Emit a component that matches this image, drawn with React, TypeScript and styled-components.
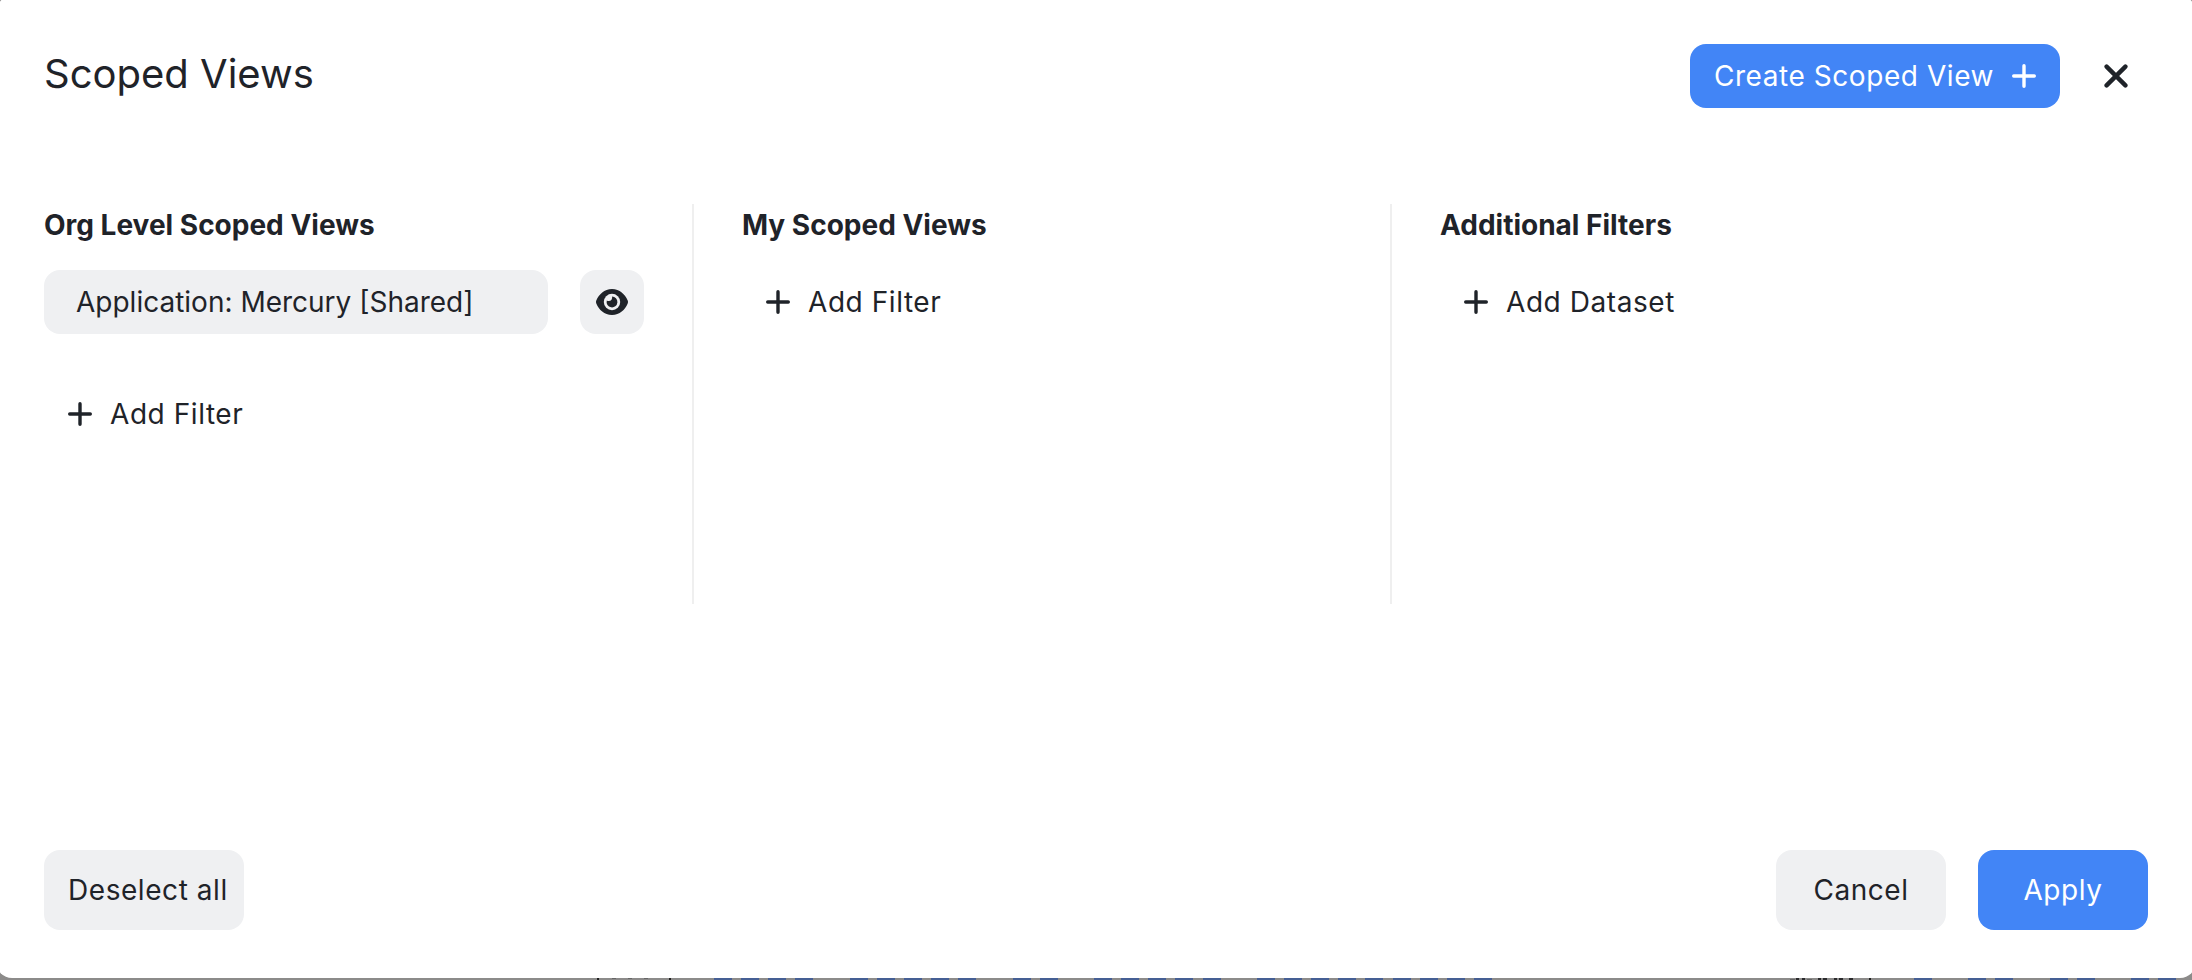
import React from "react";
import styled, { createGlobalStyle, css } from "styled-components";

const ink = "#1f2329";
const blue = "#4285f6";
const soft = "#eff0f2";

const GlobalStyle = createGlobalStyle`
  *, *::before, *::after { box-sizing: border-box; }
  html, body, #root { height: 100%; }
  body {
    margin: 0;
    overflow: hidden;
    background: #8c8b8a;
    color: ${ink};
    font-family: Inter, "Liberation Sans", sans-serif;
    font-size: 28px;
    line-height: 40px;
    -webkit-font-smoothing: antialiased;
  }
`;

const Page = styled.div`
  height: 100vh;
  display: flex;
  flex-direction: column;
`;

const Dialog = styled.section`
  flex: 1;
  display: flex;
  flex-direction: column;
  margin: -4px -4px 0;
  padding: 48px;
  background: #fff;
  border-radius: 16px;
`;

const Header = styled.header`
  display: flex;
  align-items: flex-start;
  justify-content: space-between;
`;

const Title = styled.h1`
  margin: 0;
  font-size: 40px;
  line-height: 60px;
  font-weight: 400;
`;

const Group = styled.div<{ $gap: number }>`
  display: flex;
  align-items: center;
  gap: ${({ $gap }) => $gap}px;
`;

const Button = styled.button<{ $primary?: boolean; $tall?: boolean }>`
  display: flex;
  align-items: center;
  justify-content: center;
  gap: 18px;
  height: ${({ $tall }) => ($tall ? 80 : 64)}px;
  min-width: ${({ $tall }) => ($tall ? 170 : 64)}px;
  padding: 0 24px;
  border: 0;
  border-radius: 16px;
  font: inherit;
  letter-spacing: 0.02em;
  white-space: nowrap;
  cursor: pointer;
  color: ${ink};
  background: ${soft};
  ${({ $primary }) =>
    $primary &&
    css`
      color: #fff;
      background: ${blue};
    `}
`;

const IconButton = styled(Button)`
  width: 64px;
  flex: none;
  padding: 0;
`;

const CloseButton = styled(IconButton)`
  background: none;
`;

const ViewButton = styled(Button)`
  flex: 1;
  justify-content: flex-start;
  padding: 0 32px;
  letter-spacing: normal;
`;

const AddButton = styled(Button)`
  align-self: flex-start;
  background: none;
`;

const DeselectButton = styled(Button)`
  padding: 0 16px 0 24px;
`;

const Columns = styled.main`
  flex: none;
  display: grid;
  grid-template-columns: 650fr 698fr 756fr;
  min-height: 400px;
  margin-top: 96px;
`;

const Column = styled.section`
  display: flex;
  flex-direction: column;
  padding: 0 48px;
  border-right: 2px solid #efefef;

  &:first-child { padding-left: 0; }
  &:last-child { border-right: 0; }
`;

const Heading = styled.h2`
  margin: 0 0 24px;
  font-size: 28px;
  line-height: 42px;
  font-weight: 700;
`;

const ViewRow = styled.div`
  display: flex;
  gap: 32px;
  margin-bottom: 48px;
`;

const Footer = styled.footer`
  display: flex;
  justify-content: space-between;
  margin-top: auto;
`;

const Backdrop = styled.svg`
  display: block;
  width: 100%;
  height: 2px;
  flex: none;
`;

const Plus = () => (
  <svg width="24" height="24" viewBox="0 0 24 24" fill="none" stroke="currentColor" strokeWidth="3.4" strokeLinecap="round" aria-hidden="true">
    <path d="M12 1.700v20.600M1.700 12h20.600" />
  </svg>
);

const Cross = () => (
  <svg width="24" height="24" viewBox="0 0 24 24" fill="none" stroke="currentColor" strokeWidth="4.4" strokeLinecap="round" aria-hidden="true">
    <path d="M2.600 2.600l18.800 18.800M21.400 2.600L2.600 21.400" />
  </svg>
);

const Eye = () => (
  <svg width="32" height="26" viewBox="0 0 32 26" aria-hidden="true">
    <path fill={ink} d="M16 0C8.200 0 3 5.400 .4 11.300q-.8 1.700 0 3.400C3 20.600 8.200 26 16 26s13-5.400 15.600-11.300q.8-1.700 0-3.400C29 5.400 23.800 0 16 0z" />
    <circle cx="16" cy="13" r="8.200" fill={soft} />
    <path fill={ink} d="M16 7.600a5.400 5.400 0 1 1-5.200 4q.9.500 1.900.500a3.400 3.400 0 0 0 3.300-4.500z" />
  </svg>
);

const pitch = 27.143;
const series = [
  { x: 714, slots: [0, 1, 2, 3, 5, 6, 7, 8, 9, 11, 12, 14, 15, 16, 17, 18, 20, 21, 22, 23, 24, 25, 26, 27, 28] },
  { x: 1914, slots: [0, 2, 3, 5, 6, 8, 9] },
];

export default function App() {
  return (
    <>
      <GlobalStyle />
      <Page>
        <Dialog role="dialog" aria-labelledby="dialog-title">
          <Header>
            <Title id="dialog-title">Scoped Views</Title>
            <Group $gap={24}>
              <Button $primary>
                Create Scoped View <Plus />
              </Button>
              <CloseButton aria-label="Close">
                <Cross />
              </CloseButton>
            </Group>
          </Header>
          <Columns>
            <Column>
              <Heading>Org Level Scoped Views</Heading>
              <ViewRow>
                <ViewButton>Application: Mercury [Shared]</ViewButton>
                <IconButton aria-label="Preview scoped view">
                  <Eye />
                </IconButton>
              </ViewRow>
              <AddButton>
                <Plus /> Add Filter
              </AddButton>
            </Column>
            <Column>
              <Heading>My Scoped Views</Heading>
              <AddButton>
                <Plus /> Add Filter
              </AddButton>
            </Column>
            <Column>
              <Heading>Additional Filters</Heading>
              <AddButton>
                <Plus /> Add Dataset
              </AddButton>
            </Column>
          </Columns>
          <Footer>
            <DeselectButton $tall>Deselect all</DeselectButton>
            <Group $gap={32}>
              <Button $tall>Cancel</Button>
              <Button $tall $primary>Apply</Button>
            </Group>
          </Footer>
        </Dialog>
        <Backdrop viewBox="0 0 2192 2" preserveAspectRatio="none" aria-hidden="true">
          <path fill="#1f1f1f" d="M597 0h2v2h-2zM669 0h2v2h-2zM1869 0h2v2h-2z" />
          <path fill="#2a2a2c" d="M1796 0h3v2h-3zM1802 0h3v2h-3zM1818 0h3v2h-3zM1823 0h4v2h-4zM1834 0h3v2h-3zM1839 0h4v2h-4zM1849 0h4v2h-4z" />
          <path fill="#666" d="M612 0h4v1h-4zM628 0h4v1h-4zM644 0h4v1h-4zM1790 1h5v1h-5zM1807 1h5v1h-5z" />
          {series.map(({ x, slots }) =>
            slots.map((slot) => (
              <rect key={x + slot} x={Math.round(x + slot * pitch)} width="18" height="2" fill="#455f94" />
            ))
          )}
        </Backdrop>
      </Page>
    </>
  );
}
